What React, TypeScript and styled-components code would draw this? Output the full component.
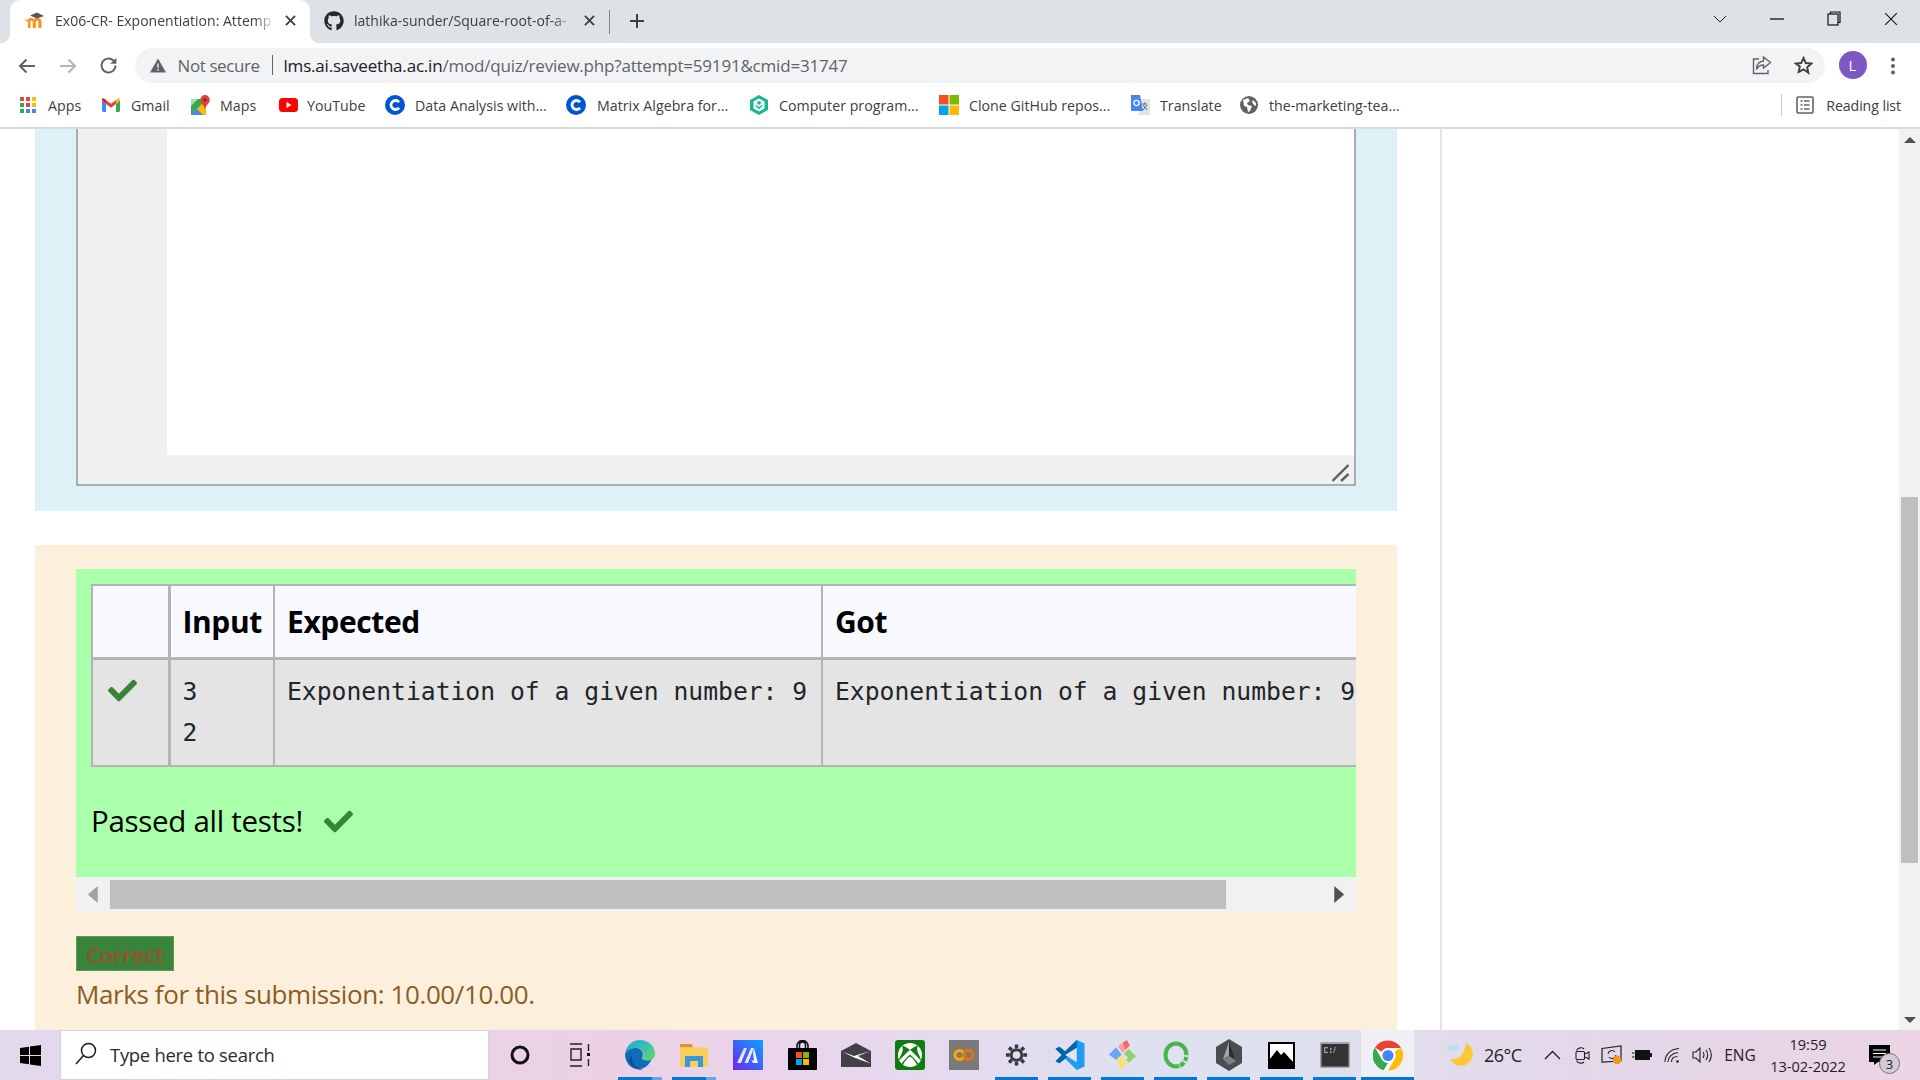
import React from "react";
import styled, { createGlobalStyle } from "styled-components";
import { FaGithub, FaCheck } from "react-icons/fa";

const UI = `"Open Sans", "Noto Sans", "Liberation Sans", sans-serif`;

const Global = createGlobalStyle`
  html, body { margin: 0; padding: 0; background: #fff; overflow: hidden; }
  * { box-sizing: border-box; }
`;

const Screen = styled.div`
  width: 1920px; height: 1080px; display: flex; flex-direction: column;
  font-family: ${UI}; overflow: hidden; background: #fff;
`;

/* ---------- tabs ---------- */
const TabStrip = styled.div`
  height: 43px; background: #dee1e6; display: flex; align-items: stretch; padding-left: 10px; flex: none;
`;
const Tab = styled.div<{ $active?: boolean; $w: number }>`
  position: relative; width: ${(p) => p.$w}px; display: flex; align-items: center;
  padding: 0 14px 2px 14px; gap: ${(p) => (p.$active ? 9 : 10)}px; font-size: 14px; color: #3c4043;
  border-radius: 10px 10px 0 0; background: ${(p) => (p.$active ? "#fff" : "transparent")};
  &::before, &::after {
    content: ""; display: ${(p) => (p.$active ? "block" : "none")}; position: absolute; bottom: 0; width: 10px; height: 10px;
  }
  &::before { left: -10px; background: radial-gradient(circle at 0 0, transparent 10px, #fff 10.5px); }
  &::after { right: -10px; background: radial-gradient(circle at 100% 0, transparent 10px, #fff 10.5px); }
`;
const TabTitle = styled.span`
  flex: 1; white-space: nowrap; letter-spacing: 0.02px;
  -webkit-mask-image: linear-gradient(90deg, #000 90%, transparent 100%);
  mask-image: linear-gradient(90deg, #000 90%, transparent 100%);
`;
const TabSep = styled.div`
  width: 1px; height: 24px; background: #80868b; align-self: center;
`;
const NewTab = styled.div`
  width: 54px; display: flex; align-items: center; justify-content: center; padding-bottom: 1px;
`;
const StripSpace = styled.div`flex: 1;`;
const WinBtn = styled.div<{ $w: number }>`
  width: ${(p) => p.$w}px; display: flex; align-items: center; justify-content: center; padding-bottom: 6px;
`;

/* ---------- toolbar ---------- */
const Toolbar = styled.div`
  height: 43px; flex: none; display: flex; align-items: flex-start; padding: 5px 0 0 7px;
`;
const NavBtn = styled.div`
  width: 40.5px; height: 35px; display: flex; align-items: center; justify-content: center;
`;
const Omnibox = styled.div`
  width: 1690px; height: 35px; margin-left: 6px; border-radius: 18px; background: #f1f3f4;
  display: flex; align-items: center; padding: 0 1px 1px 15px; font-size: 17px; color: #5f6368;
`;
const NotSecure = styled.span`margin-left: 12px; width: 83px; white-space: nowrap; letter-spacing: -0.4px;`;
const Divider = styled.span`width: 1px; height: 20px; background: #5f6368; margin: 0 11px;`;
const Url = styled.span`white-space: nowrap; letter-spacing: -0.2px; flex: 1;`;
const UrlHost = styled.span`color: #202124;`;
const OmniIcon = styled.div`width: 41px; display: flex; align-items: center; justify-content: center;`;
const Avatar = styled.div`
  width: 28px; height: 28px; border-radius: 50%; background: #7e57c2; color: #fff; margin: 3px 0 0 14px;
  font-size: 15px; display: flex; align-items: center; justify-content: center; flex: none;
`;
const Dots = styled.div`width: 40px; margin-left: 6px; display: flex; justify-content: center; height: 35px; align-items: center;`;

/* ---------- bookmarks ---------- */
const Bookmarks = styled.div`
  height: 43px; flex: none; display: flex; align-items: center; padding: 0 0 3px 20px;
  border-bottom: 2px solid #dadce0; font-size: 14.2px; color: #3c4043;
`;
const Mark = styled.div<{ $w: number; $gap: number }>`
  width: ${(p) => p.$w}px; display: flex; align-items: center; gap: ${(p) => p.$gap}px; white-space: nowrap; flex: none;
`;
const MarkText = styled.span`letter-spacing: 0.02px;`;
const BarSep = styled.div`width: 1px; height: 22px; background: #c9cbce; margin: 0 14px 0 auto;`;
const ReadingItem = styled.div`display: flex; align-items: center; gap: 12px; padding-right: 19px; letter-spacing: -0.1px;`;

/* ---------- page ---------- */
const Viewport = styled.div`flex: 1; min-height: 0; display: flex;`;
const Page = styled.div`width: 1440px; flex: none; display: flex; flex-direction: column; padding-left: 35px; overflow: hidden;`;
const Aside = styled.div`flex: 1; border-left: 2px solid #e4e4e4;`;

const AnswerPanel = styled.div`
  width: 1362px; height: 382px; flex: none; background: #def1f7; padding: 0 41px 25px;
`;
const EditorFrame = styled.div`
  width: 1280px; height: 100%; background: #f0f0f0; border: 2px solid #acacac; border-top: 0;
  display: grid; grid-template-columns: 89px 1fr; grid-template-rows: 1fr 29px;
`;
const Gutter = styled.div`background: #f0f0f0;`;
const Code = styled.div`background: #fff;`;
const EditorFoot = styled.div`
  grid-column: 1 / 3; display: flex; justify-content: flex-end; align-items: flex-end; padding: 0 4px 2px 0;
`;

const FeedbackPanel = styled.div`
  width: 1362px; flex: 1; min-height: 0; margin-top: 34px; background: #fcefdc; padding: 24px 0 0 41px;
`;
const Results = styled.div`
  width: 1280px; height: 308px; background: #aaffaa; padding: 15px 0 0 15px; overflow: hidden;
`;
const Table = styled.table`
  border-collapse: collapse; table-layout: fixed; width: 1279px; background: #e4e4e4;
`;
const HeadCell = styled.th<{ $w: number; $thick?: boolean }>`
  width: ${(p) => p.$w}px; height: 73px; background: #f8f9ff; text-align: left; padding: 0 0 0 12px; color: #000;
  font-size: 30px; font-weight: 700; letter-spacing: -0.4px;
  border: 2px solid #b4b4b4; border-bottom-width: 3px; border-right-width: ${(p) => (p.$thick ? 3 : 2)}px;
`;
const BodyCell = styled.td<{ $thick?: boolean }>`
  height: 108px; vertical-align: top; padding: 11px 0 0 12px; color: #212529; white-space: pre;
  font-family: "DejaVu Sans Mono", "Liberation Mono", monospace; font-size: 24.7px; line-height: 41px;
  border: 2px solid #b4b4b4; border-right-width: ${(p) => (p.$thick ? 3 : 2)}px;
`;
const TableCheck = styled(FaCheck)`
  color: #3a833a; width: 29px; height: 29px; display: block; margin: 5px 0 0 3px;
`;
const Passed = styled.div`
  display: flex; align-items: center; gap: 21px; margin-top: 32px;
  font-size: 29.5px; line-height: 44px; color: #000; letter-spacing: -0.3px;
`;
const PassedCheck = styled(FaCheck)`color: #3a833a; width: 29px; height: 29px;`;
const HScroll = styled.div`
  width: 1280px; height: 35px; flex: none; background: #f1f1f1; display: flex; align-items: center;
`;
const ScrollEnd = styled.div<{ $w: number }>`
  width: ${(p) => p.$w}px; display: flex; justify-content: center; flex: none;
`;
const HThumb = styled.div`width: 1116px; height: 29px; background: #bfbfbf; margin-top: -1px; flex: none;`;
const HSpace = styled.div`flex: 1;`;
const Verdict = styled.div`
  align-self: flex-start; width: 98px; height: 35px; margin-top: 24px; background: #3a833a; border: 1px solid #5a9a58;
  color: #87592c; font-size: 22px; font-weight: 700; display: flex; align-items: center; justify-content: center; letter-spacing: -0.5px;
`;
const Marks = styled.div`
  margin-top: 4px; font-size: 26px; line-height: 38px; color: #8a5d24; white-space: nowrap; letter-spacing: -0.4px;
`;

const VScroll = styled.div`
  width: 21px; flex: none; background: #f1f1f1; display: flex; flex-direction: column; align-items: center;
`;
const VEnd = styled.div`height: 21px; display: flex; align-items: center; justify-content: center; flex: none;`;
const VThumb = styled.div`width: 17px; height: 366px; margin-top: 347px; background: #bfbfbf; flex: none;`;
const VSpace = styled.div`flex: 1;`;

/* ---------- taskbar ---------- */
const Taskbar = styled.div`
  height: 50px; flex: none; display: flex; align-items: stretch;
  background: linear-gradient(90deg, #e2d9ec 0%, #e8d2e8 15%, #ecd1e6 33%, #e8d7ee 45%, #dfe0f0 58%, #dfe0ef 70%, #e2dcec 74%, #e4d5e7 88%, #ecd4e4 100%);
`;
const Start = styled.div`width: 60px; display: flex; align-items: center; justify-content: center; flex: none;`;
const Search = styled.div`
  width: 429px; flex: none; background: #fff; border: 1px solid #d5d1da; display: flex; align-items: center;
  padding: 0 0 2px 14px; gap: 13px; font-size: 18.4px; color: #2b2b2b; letter-spacing: -0.25px;
`;
const SysBtn = styled.div<{ $nudge: number }>`
  width: 60px; flex: none; display: flex; align-items: center; justify-content: center; padding-left: ${(p) => p.$nudge}px;
`;
const Apps = styled.div`display: flex; margin-left: 4px; flex: none;`;
const AppBtn = styled.div<{ $w: number; $run?: "split" | "full" | "active" }>`
  position: relative; width: ${(p) => p.$w}px; flex: none; display: flex; align-items: center; justify-content: center;
  background: ${(p) => (p.$run === "active" ? "#f0eff5" : "transparent")};
  &::after {
    content: ""; position: absolute; bottom: 0; height: 3px; background: ${(p) =>
      p.$run === "split" ? "linear-gradient(90deg,#0078d7 77%,#63a9e2 77%)" : "#0078d7"};
    display: ${(p) => (p.$run ? "block" : "none")};
    left: ${(p) => (p.$run === "active" ? 0 : 5)}px; right: ${(p) => (p.$run === "active" ? 0 : 5)}px;
  }
`;
const Tray = styled.div`margin-left: 26px; display: flex; align-items: center; flex: none; color: #1f1f1f;`;
const TrayCell = styled.div<{ $w: number }>`
  width: ${(p) => p.$w}px; height: 100%; display: flex; align-items: center; justify-content: center; flex: none;
`;
const Temp = styled(TrayCell)`font-size: 18px; justify-content: flex-start; padding-left: 4px; letter-spacing: -0.5px;`;
const Lang = styled(TrayCell)`font-size: 15.5px; letter-spacing: -0.1px;`;
const Clock = styled(TrayCell)`
  flex-direction: column; font-size: 14.6px; line-height: 22px; padding-bottom: 1px; letter-spacing: -0.05px;
`;
const Notify = styled(TrayCell)`position: relative;`;
const Badge = styled.span`
  position: absolute; left: 26px; top: 23px; width: 21px; height: 21px; border-radius: 50%; background: #d2cdd4;
  border: 1px solid #77737a; font-size: 13px; display: flex; align-items: center; justify-content: center; color: #222;
`;

/* ---------- icons ---------- */
const Moodle = () => (
  <svg width="22" height="20" viewBox="0 0 22 20"><path d="M4 17V9.500C4 7.500 5.500 7 7 7c1.200 0 2.200.5 2.800 1.400C10.500 7.500 11.500 7 13 7c2.500 0 4.500 1 4.500 3.500V17h-3.200v-6c0-.8-.4-1.300-1.200-1.300s-1.200.5-1.200 1.300v6H8.700v-6c0-.8-.5-1.300-1.200-1.300s-1 .5-1 1.300V17z" fill="#f7931e"/><path d="M6 4.500L13 1.500l7 3.500-7 2.500z" fill="#58595b"/><path d="M0 8.500h4v3z" fill="#f9a94d"/></svg>
);
const X = ({ s = 12, c = "#3c4043", w = 2 }: { s?: number; c?: string; w?: number }) => (
  <svg width={s} height={s} viewBox="0 0 12 12"><path d="M1 1l10 10M11 1L1 11" stroke={c} strokeWidth={w} fill="none" /></svg>
);
const Back = ({ c = "#5f6368", flip = false }: { c?: string; flip?: boolean }) => (
  <svg width="18" height="16" viewBox="0 0 18 16" transform={flip ? "scale(-1 1)" : undefined}><path d="M17 8H2M8.500 1.500L2 8l6.500 6.500" stroke={c} strokeWidth="2" fill="none" /></svg>
);
const Reload = () => (
  <svg width="21" height="21" viewBox="0 0 24 24"><path d="M20 12a8 8 0 1 1-2.400-5.700L20 8.500" stroke="#5f6368" strokeWidth="2.200" fill="none"/><path d="M21 3v7h-7z" fill="#5f6368"/></svg>
);
const Warn = () => (
  <svg width="16" height="15" viewBox="0 0 16 15"><path d="M8 0.500L16 14.500H0z" fill="#5f6368"/><path d="M7.300 5.500h1.400v4.500H7.300zM7.300 11h1.400v1.400H7.300z" fill="#f1f3f4"/></svg>
);
const Share = () => (
  <svg width="20" height="20" viewBox="0 0 20 20" fill="none" stroke="#5f6368" strokeWidth="1.400"><path d="M7 4H1.500v14.500H16V15"/><path d="M11.500 2l7 5.500-7 5.500v-3c-3.500 0-5.500 1.500-7 4.500 0-5 2.500-8 7-8.500z"/></svg>
);
const Star = () => (
  <svg width="19" height="19" viewBox="0 0 24 24" fill="none" stroke="#3c4043" strokeWidth="2.400"><path d="M12 2.500l2.900 6.400 7 .7-5.300 4.700 1.500 6.900L12 16.800l-6.100 3.400 1.500-6.900L2.100 9.600l7-.7z"/></svg>
);
const Kebab = () => (
  <svg width="4" height="18" viewBox="0 0 4 18" fill="#5f6368"><circle cx="2" cy="2.500" r="2"/><circle cx="2" cy="9" r="2"/><circle cx="2" cy="15.500" r="2"/></svg>
);
const AppsGrid = () => {
  const c = ["#ea4335", "#ea4335", "#fbbc04", "#34a853", "#ea4335", "#fbbc04", "#34a853", "#4285f4", "#4285f4"];
  return (
    <svg width="16" height="16" viewBox="0 0 16 16">
      {c.map((f, i) => <rect key={i} x={(i % 3) * 6} y={Math.floor(i / 3) * 6} width="4" height="4" fill={f} />)}
    </svg>
  );
};
const Gmail = () => (
  <svg width="18" height="14" viewBox="0 0 18 14"><path d="M0 2v10.500C0 13.300.7 14 1.500 14H4V6z" fill="#4285f4"/><path d="M14 14h2.500c.8 0 1.500-.7 1.500-1.500V2l-4 4z" fill="#34a853"/><path d="M0 2l4 4v-4L2 .5C1-.2 0 .5 0 2z" fill="#c5221f"/><path d="M4 6V2l5 3.800L14 2v4L9 9.800z" fill="#ea4335"/><path d="M14 2v4l4-4c0-1.500-1-2.200-2-1.500z" fill="#fbbc04"/></svg>
);
const Maps = () => (
  <svg width="19" height="20" viewBox="0 0 19 20"><path d="M0 4h11v16H0z" fill="#34a853"/><path d="M0 20l11-11 4 4v7z" fill="#fbbc04"/><path d="M0 20l6-6 6 6z" fill="#4285f4"/><path d="M0 4h7L0 11z" fill="#a7d8a7"/><path d="M14 0a4.800 4.800 0 0 1 4.800 4.800C18.800 8 15 10.500 14 14c-1-3.500-4.800-6-4.800-9.200A4.800 4.800 0 0 1 14 0z" fill="#db4437"/><circle cx="14" cy="4.800" r="1.600" fill="#8a2018"/></svg>
);
const YouTube = () => (
  <svg width="19" height="14" viewBox="0 0 19 14"><rect width="19" height="14" rx="3.500" fill="#f00"/><path d="M7.500 4l5 3-5 3z" fill="#fff"/></svg>
);
const Coursera = () => (
  <svg width="20" height="20" viewBox="0 0 20 20"><circle cx="10" cy="10" r="10" fill="#0056d2"/><path d="M14 7.200a4.500 4.500 0 1 0 0 5.600" stroke="#fff" strokeWidth="2.800" fill="none"/></svg>
);
const Kode = () => (
  <svg width="18" height="20" viewBox="0 0 18 20"><path d="M9 0l9 5v10l-9 5-9-5V5z" fill="#17b890"/><path d="M9 3.500l5.500 3v7L9 16.500l-5.500-3v-7z" fill="#fff"/><circle cx="9" cy="7.800" r="1.900" fill="#17b890"/><path d="M5 10l4 4.500 4-4.500-1.500 0L9 12l-2.500-2z" fill="#17b890"/></svg>
);
const Ms = () => (
  <svg width="20" height="20" viewBox="0 0 20 20"><rect width="9.500" height="9.500" fill="#f25022"/><rect x="10.500" width="9.500" height="9.500" fill="#7fba00"/><rect y="10.500" width="9.500" height="9.500" fill="#00a4ef"/><rect x="10.500" y="10.500" width="9.500" height="9.500" fill="#ffb900"/></svg>
);
const Translate = () => (
  <svg width="20" height="20" viewBox="0 0 20 20"><path d="M8 4h12v16H9z" fill="#dfe3ea"/><path d="M12 9h5M14.500 7.500v2M13 15l4-5M13 10l4 5" stroke="#5f6b7a" strokeWidth="1" fill="none"/><path d="M1 0h9l3 16H2.500C1.500 16 1 15.500 1 14.500z" fill="#4285f4"/><circle cx="6.500" cy="8" r="2.600" fill="none" stroke="#fff" strokeWidth="1.300"/></svg>
);
const Globe = () => (
  <svg width="18" height="18" viewBox="0 0 18 18"><circle cx="9" cy="9" r="9" fill="#5f6368"/><path d="M3 4l5-2 2 3-3 2 1 2 4 1-2 5-2 1-1-5-3-1zM13 4l3 3v3l-2-1-2-3z" fill="#fff"/></svg>
);
const ReadingList = () => (
  <svg width="18" height="18" viewBox="0 0 18 18" fill="none" stroke="#5f6368" strokeWidth="1.600"><rect x="1" y="1" width="16" height="16" rx="1"/><path d="M6.500 5H4.500M13.500 5H8M6.500 9H4.500M13.500 9H8M6.500 13H4.500M13.500 13H8"/></svg>
);
const Resize = () => (
  <svg width="18" height="18" viewBox="0 0 18 18" stroke="#606060" strokeWidth="2.400"><path d="M0.500 17L16.500 1M9 17l7.500-7"/></svg>
);
const Tri = ({ d, c = "#505050", s = 12 }: { d: "l" | "r" | "u" | "d"; c?: string; s?: number }) => {
  const p = { l: "M9 0v12L2 6z", r: "M3 0v12l7-6z", u: "M0 9h12L6 3z", d: "M0 3h12L6 9z" }[d];
  return <svg width={s} height={s} viewBox="0 0 12 12"><path d={p} fill={c} /></svg>;
};
const WinLogo = () => (
  <svg width="21" height="21" viewBox="0 0 21 21" fill="#000"><path d="M0 3l9-1.300V10H0zM10 1.500L21 0v10H10zM0 11h9v8.300L0 18zM10 11h11v10l-11-1.500z"/></svg>
);
const Lens = () => (
  <svg width="22" height="24" viewBox="0 0 22 24" fill="none" stroke="#1a1a1a" strokeWidth="1.500"><circle cx="13.500" cy="8.500" r="7"/><path d="M8.500 13.500L1 22"/></svg>
);
const Ring = () => (
  <svg width="20" height="20" viewBox="0 0 20 20"><circle cx="10" cy="10" r="8" fill="none" stroke="#111" strokeWidth="3"/></svg>
);
const TaskView = () => (
  <svg width="22" height="24" viewBox="0 0 22 24" fill="none" stroke="#222" strokeWidth="1.400"><path d="M0 1h12M0 23h12M1 6h10v11H1z"/><path d="M18.500 1v7M18.500 16v7"/><rect x="17" y="10" width="3" height="3" fill="#111" stroke="none"/></svg>
);
const Edge = () => (
  <svg width="30" height="30" viewBox="0 0 30 30">
    <defs>
      <linearGradient id="eg" x1="0" y1="0" x2="1" y2="1"><stop offset="0" stopColor="#1fa7d8"/><stop offset=".5" stopColor="#35c1b0"/><stop offset="1" stopColor="#6ad85a"/></linearGradient>
    </defs>
    <path d="M15 0c9 0 15 6.500 15 14 0 4-3 6.500-7 6.500-3 0-5.500-1-5.500-2.500 0-1 1-1.500 1-3.500C18.500 10 15 8 11.500 8 6 8 2 11 0 14 1 6 7 0 15 0z" fill="url(#eg)"/>
    <path d="M0 14c2-3.500 6-6 11-6 4 0 7 2.500 7 6.500 0 2-1 2.500-1 3.500 0 1.500 3 2.500 5.500 2.500 1.500 0 3-.5 4-1.500-2 6-7 10-12.500 10C6 29.500 0 23 0 14z" fill="#0f6cbd"/>
    <path d="M7 16c-1 6 3 13 11 13.500C12 31 5 26 4 20c0-2 1.500-3.500 3-4z" fill="#0a4f91"/>
  </svg>
);
const Explorer = () => (
  <svg width="28" height="23" viewBox="0 0 28 23"><path d="M0 1.500C0 .7.700 0 1.500 0h10l2 3.500H0z" fill="#d99a1c"/><path d="M0 3.500h26c1.100 0 2 .9 2 2V21c0 1.100-.9 2-2 2H2c-1.100 0-2-.9-2-2z" fill="#f9cf5b"/><path d="M5 12h18v11h-5v-6h-8v6H5z" fill="#3a97d8"/></svg>
);
const Automate = () => (
  <svg width="30" height="30" viewBox="0 0 30 30">
    <defs><linearGradient id="ag" x1="1" y1="0" x2="0" y2="1"><stop offset="0" stopColor="#0aa2ff"/><stop offset="1" stopColor="#6a27f0"/></linearGradient></defs>
    <rect width="30" height="30" fill="url(#ag)"/>
    <path d="M4 23L11 8h3L8 23zM11.500 23L18 8h3l-6 15z" fill="#e6e6ff"/><path d="M21 8l4 15h-5l-1.500-2.500h2.500L20 14z" fill="#f2f0ff"/>
  </svg>
);
const Store = () => (
  <svg width="29" height="30" viewBox="0 0 29 30"><path d="M9 8V6a5.500 5.500 0 0 1 11 0v2M11.500 8V5a3 3 0 0 1 6 0v3" fill="none" stroke="#111" strokeWidth="1.500"/><rect y="8" width="29" height="22" rx="1" fill="#000"/><rect x="8" y="12" width="6" height="6" fill="#f25022"/><rect x="15" y="12" width="6" height="6" fill="#7fba00"/><rect x="8" y="19" width="6" height="6" fill="#00a4ef"/><rect x="15" y="19" width="6" height="6" fill="#ffb900"/></svg>
);
const Mail = () => (
  <svg width="30" height="24" viewBox="0 0 30 24"><path d="M15 0l15 8v16H0V8z" fill="#453f48"/><path d="M1 8.500L13 13 29.500 8 17 13l12.500 7.500L13 14.500z" fill="#fff"/></svg>
);
const Xbox = () => (
  <svg width="30" height="30" viewBox="0 0 30 30"><rect width="30" height="30" rx="3" fill="#107c10"/><circle cx="15" cy="15" r="12" fill="#fff"/><path d="M15 10C12 7.500 9 5.500 7 6 10 11.500 4 16.500 4 20.500l6-6c2-2 3.500-3.500 5-4.500zM15 10c3-2.500 6-4.500 8-4-3 5.500 3 10.500 3 14.500l-6-6c-2-2-3.500-3.500-5-4.500z" fill="#107c10"/><path d="M15 14.500c-3 2.500-6 6-8.500 9l1.500 1.500c1-2.500 4-7 7-8.500 3 1.500 6 6 7 8.500l1.500-1.500c-2.500-3-5.500-6.500-8.500-9z" fill="#107c10"/></svg>
);
const Colab = () => (
  <svg width="30" height="30" viewBox="0 0 30 30"><rect width="30" height="30" fill="#7a7a7a"/><circle cx="10.500" cy="15" r="4.500" fill="none" stroke="#f9ab00" strokeWidth="3"/><circle cx="19.500" cy="15" r="4.500" fill="none" stroke="#e8710a" strokeWidth="3"/></svg>
);
const Gear = () => (
  <svg width="23" height="24" viewBox="0 0 24 24" fill="none" stroke="#3a3a3e" strokeWidth="3"><circle cx="12" cy="12" r="5.500"/><path d="M12 1v4M12 19v4M1 12h4M19 12h4M4.200 4.200l2.900 2.900M16.900 16.900l2.900 2.900M4.200 19.800l2.900-2.900M16.900 7.100l2.900-2.900" strokeWidth="3.600"/></svg>
);
const VSCode = () => (
  <svg width="30" height="30" viewBox="0 0 30 31"><path d="M22 0l8 3.500v24L22 31 10 19.500 4 24l-4-2 6.500-6.500L0 9l4-2 6 4.500z" fill="#1f9cf0"/><path d="M22 0L10 11.500 4 7 0 9l6.500 6.500L0 22l4 2 6-4.500L22 8z" fill="#0065a9"/><path d="M22 8v15l-12-7.500z" fill="#e6e2ef"/></svg>
);
const GitKraken = () => (
  <svg width="31" height="30" viewBox="0 0 30 33">
    <path d="M15 3l5-3 3 6-5 5z" fill="#f06a6a"/><path d="M10 7l5-4 3 8-3 3z" fill="#f4a0a0"/>
    <path d="M0 16l8-8 6 8-6 6z" fill="#6aa7f8"/><path d="M17 14l5-4 8 8-8 7-3-3 2-3-4-3z" fill="#8fd36a"/>
    <path d="M8 22l6-5 6 8-6 8z" fill="#f7e07a"/>
  </svg>
);
const Loop = () => (
  <svg width="26" height="28" viewBox="0 0 26 28"><ellipse cx="13" cy="14" rx="10.500" ry="11.500" fill="none" stroke="#46b54a" strokeWidth="4"/><ellipse cx="13" cy="14" rx="10.500" ry="11.500" fill="none" stroke="#c9eec4" strokeWidth="4" strokeDasharray="2 4 2 5 1 60"/></svg>
);
const HexApp = () => (
  <svg width="26" height="32" viewBox="0 0 26 32"><path d="M13 0l13 8v16l-13 8L0 24V8z" fill="#4a4d52"/><path d="M13 3L7 20l6-3.500z" fill="#a4a8ad"/><path d="M13 3l6 17-6-3.500z" fill="#2b2d31"/><path d="M7 20l6 6 7-4-7-5z" fill="#7d8186"/></svg>
);
const Photos = () => (
  <svg width="27" height="27" viewBox="0 0 27 27"><rect x="1" y="1" width="25" height="25" fill="#fff" stroke="#000" strokeWidth="2"/><path d="M2 25V17l7-9 4 5 3-3 9 10v5z" fill="#000"/></svg>
);
const Cmd = () => (
  <svg width="30" height="26" viewBox="0 0 30 26"><rect width="30" height="26" rx="1.500" fill="#a5a3a8"/><rect x="1.500" y="2" width="27" height="22.500" fill="#333335"/><path d="M4 5h4v1.200H5.300v3.600H8V11H4zM10 9h1.500v2H10zM10 6h1.500v2H10zM13 11l2-6h1l-2 6z" fill="#9c9a9f"/></svg>
);
const Chrome = () => (
  <svg width="30" height="31" viewBox="0 0 30 30"><circle cx="15" cy="15" r="15" fill="#fff"/><path d="M15 0a15 15 0 0 1 13 7.500H15a7.500 7.500 0 0 0-6.500 3.800L2 7A15 15 0 0 1 15 0z" fill="#ea4335"/><path d="M28 7.500A15 15 0 0 1 15 30l6.500-11.300A7.500 7.500 0 0 0 21.500 11z" fill="#fbbc04"/><path d="M2 7l6.500 11.300A7.500 7.500 0 0 0 15 22.500L10.500 30 15 30A15 15 0 0 1 2 7z" fill="#34a853"/><circle cx="15" cy="15" r="7" fill="#fff"/><circle cx="15" cy="15" r="5.500" fill="#4285f4"/></svg>
);
const Moon = () => (
  <svg width="30" height="26" viewBox="0 0 30 26"><path d="M21 1a12 12 0 1 1-16 16c7 1.500 14-2 16-16z" fill="#fcc934"/><ellipse cx="8" cy="6" rx="6" ry="3.300" fill="#bcdcf2"/></svg>
);
const Caret = () => (
  <svg width="17" height="10" viewBox="0 0 17 10" fill="none" stroke="#222" strokeWidth="1.400"><path d="M1 9l7.500-7.500L16 9"/></svg>
);
const Meet = () => (
  <svg width="15" height="19" viewBox="0 0 15 19" fill="none" stroke="#222" strokeWidth="1.100"><path d="M1.500 4.500C3 1.500 7 1 9 3M1.500 14.500C3 17.500 7 18 9 16"/><rect x="1" y="5.500" width="8.500" height="8" rx="1"/><path d="M10 8l4-2v7l-4-2"/></svg>
);
const Sync = () => (
  <svg width="22" height="20" viewBox="0 0 22 20"><path d="M1 3.500L20 1v15l-19 1z" fill="none" stroke="#222" strokeWidth="1.200"/><path d="M7 9a4 4 0 0 1 7-2M15 10a4 4 0 0 1-7 2" stroke="#222" strokeWidth="1.100" fill="none"/><circle cx="16" cy="15" r="4.300" fill="#f7941d"/></svg>
);
const Battery = () => (
  <svg width="20" height="12" viewBox="0 0 20 12"><path d="M0 4h2.500M0 8h2.500" stroke="#111" strokeWidth="1"/><rect x="3" y="1" width="15" height="10" fill="#111"/><rect x="18" y="4" width="2" height="4" fill="#111"/></svg>
);
const Wifi = () => (
  <svg width="17" height="16" viewBox="0 0 17 16" fill="none" stroke="#222" strokeWidth="1.100"><path d="M1 15C1 8 6 2 15 1.500M4 15c0-5 4-9 10-9.500"/><path d="M7.500 15c0-3 2-5.500 6-5.500"/><circle cx="13.500" cy="14.500" r="1.300" fill="#222" stroke="none"/></svg>
);
const Speaker = () => (
  <svg width="20" height="16" viewBox="0 0 20 16" fill="none" stroke="#222" strokeWidth="1.100"><path d="M1 5h3l4-4v14l-4-4H1z"/><path d="M11 5c1.200 1.800 1.200 4.200 0 6M14 3c2 3 2 7 0 10M17 1c3 4.500 3 9.500 0 14"/></svg>
);
const Bubble = () => (
  <svg width="21" height="20" viewBox="0 0 21 20"><path d="M0 0h21v17H9l-4 3v-3H0z" fill="#000"/><path d="M4 5h13M4 8.500h13M4 12h9" stroke="#fff" strokeWidth="1.100"/></svg>
);

const marks: { w: number; gap: number; icon: React.ReactNode; label: string }[] = [
  { w: 82, gap: 12, icon: <AppsGrid />, label: "Apps" },
  { w: 89, gap: 11, icon: <Gmail />, label: "Gmail" },
  { w: 88, gap: 10, icon: <Maps />, label: "Maps" },
  { w: 106, gap: 9, icon: <YouTube />, label: "YouTube" },
  { w: 181, gap: 10, icon: <Coursera />, label: "Data Analysis with..." },
  { w: 184, gap: 11, icon: <Coursera />, label: "Matrix Algebra for..." },
  { w: 189, gap: 11, icon: <Kode />, label: "Computer program..." },
  { w: 191, gap: 10, icon: <Ms />, label: "Clone GitHub repos..." },
  { w: 110, gap: 10, icon: <Translate />, label: "Translate" },
  { w: 170, gap: 11, icon: <Globe />, label: "the-marketing-tea..." },
];

const taskApps: { w: number; icon: React.ReactNode; run?: "split" | "full" | "active" }[] = [
  { w: 54, icon: <Edge />, run: "split" },
  { w: 54, icon: <Explorer />, run: "split" },
  { w: 54, icon: <Automate /> },
  { w: 54, icon: <Store /> },
  { w: 54, icon: <Mail /> },
  { w: 54, icon: <Xbox /> },
  { w: 53, icon: <Colab /> },
  { w: 53, icon: <Gear />, run: "full" },
  { w: 53, icon: <VSCode />, run: "full" },
  { w: 53, icon: <GitKraken />, run: "full" },
  { w: 53, icon: <Loop />, run: "full" },
  { w: 53, icon: <HexApp />, run: "full" },
  { w: 53, icon: <Photos />, run: "full" },
  { w: 53, icon: <Cmd />, run: "full" },
  { w: 53, icon: <Chrome />, run: "active" },
];

export default function App() {
  return (
    <Screen>
      <Global />
      <TabStrip>
        <Tab $active $w={300}>
          <Moodle />
          <TabTitle>Ex06-CR- Exponentiation: Attemp</TabTitle>
          <X s={11} />
        </Tab>
        <Tab $w={299}>
          <FaGithub size={20} color="#24292e" />
          <TabTitle>lathika-sunder/Square-root-of-a-</TabTitle>
          <X s={11} />
        </Tab>
        <TabSep />
        <NewTab>
          <svg width="16" height="16" viewBox="0 0 16 16"><path d="M8 1v14M1 8h14" stroke="#3c4043" strokeWidth="2" /></svg>
        </NewTab>
        <StripSpace />
        <WinBtn $w={57}>
          <svg width="14" height="8" viewBox="0 0 14 8"><path d="M1 1l6 6 6-6" stroke="#222" strokeWidth="1" fill="none" /></svg>
        </WinBtn>
        <WinBtn $w={57}>
          <svg width="14" height="2" viewBox="0 0 14 2"><path d="M0 1h14" stroke="#111" strokeWidth="1.300" /></svg>
        </WinBtn>
        <WinBtn $w={57}>
          <svg width="14" height="15" viewBox="0 0 14 15" fill="none" stroke="#111" strokeWidth="1.200"><rect x="1" y="3" width="10" height="11" /><path d="M3.500 3V1H13v10.500h-2" /></svg>
        </WinBtn>
        <WinBtn $w={58}>
          <X s={14} c="#111" w={0.9} />
        </WinBtn>
      </TabStrip>

      <Toolbar>
        <NavBtn><Back /></NavBtn>
        <NavBtn><Back c="#b3b6ba" flip /></NavBtn>
        <NavBtn><Reload /></NavBtn>
        <Omnibox>
          <Warn />
          <NotSecure>Not secure</NotSecure>
          <Divider />
          <Url><UrlHost>lms.ai.saveetha.ac.in</UrlHost>/mod/quiz/review.php?attempt=59191&amp;cmid=31747</Url>
          <OmniIcon><Share /></OmniIcon>
          <OmniIcon><Star /></OmniIcon>
        </Omnibox>
        <Avatar>L</Avatar>
        <Dots><Kebab /></Dots>
      </Toolbar>

      <Bookmarks>
        {marks.map((m) => (
          <Mark key={m.label} $w={m.w} $gap={m.gap}>
            {m.icon}
            <MarkText>{m.label}</MarkText>
          </Mark>
        ))}
        <BarSep />
        <ReadingItem><ReadingList />Reading list</ReadingItem>
      </Bookmarks>

      <Viewport>
        <Page>
          <AnswerPanel>
            <EditorFrame>
              <Gutter />
              <Code />
              <EditorFoot><Resize /></EditorFoot>
            </EditorFrame>
          </AnswerPanel>
          <FeedbackPanel>
            <Results>
              <Table>
                <thead>
                  <tr>
                    <HeadCell $w={77} $thick />
                    <HeadCell $w={105}>Input</HeadCell>
                    <HeadCell $w={548}>Expected</HeadCell>
                    <HeadCell $w={549}>Got</HeadCell>
                  </tr>
                </thead>
                <tbody>
                  <tr>
                    <BodyCell $thick><TableCheck /></BodyCell>
                    <BodyCell>{"3\n2"}</BodyCell>
                    <BodyCell>Exponentiation of a given number: 9</BodyCell>
                    <BodyCell>Exponentiation of a given number: 9</BodyCell>
                  </tr>
                </tbody>
              </Table>
              <Passed>Passed all tests! <PassedCheck /></Passed>
            </Results>
            <HScroll>
              <ScrollEnd $w={34}><Tri d="l" c="#a3a3a3" s={17} /></ScrollEnd>
              <HThumb />
              <HSpace />
              <ScrollEnd $w={36}><Tri d="r" s={17} /></ScrollEnd>
            </HScroll>
            <Verdict>Correct</Verdict>
            <Marks>Marks for this submission: 10.00/10.00.</Marks>
          </FeedbackPanel>
        </Page>
        <Aside />
        <VScroll>
          <VEnd><Tri d="u" /></VEnd>
          <VThumb />
          <VSpace />
          <VEnd><Tri d="d" /></VEnd>
        </VScroll>
      </Viewport>

      <Taskbar>
        <Start><WinLogo /></Start>
        <Search><Lens />Type here to search</Search>
        <SysBtn $nudge={1}><Ring /></SysBtn>
        <SysBtn $nudge={3}><TaskView /></SysBtn>
        <Apps>
          {taskApps.map((a, i) => <AppBtn key={i} $w={a.w} $run={a.run}>{a.icon}</AppBtn>)}
        </Apps>
        <Tray>
          <TrayCell $w={40}><Moon /></TrayCell>
          <Temp $w={57}>26°C</Temp>
          <TrayCell $w={30}><Caret /></TrayCell>
          <TrayCell $w={30}><Meet /></TrayCell>
          <TrayCell $w={30}><Sync /></TrayCell>
          <TrayCell $w={30}><Battery /></TrayCell>
          <TrayCell $w={30}><Wifi /></TrayCell>
          <TrayCell $w={30}><Speaker /></TrayCell>
          <Lang $w={46}>ENG</Lang>
          <Clock $w={90}><span>19:59</span><span>13-02-2022</span></Clock>
          <Notify $w={52}><Bubble /><Badge>3</Badge></Notify>
        </Tray>
      </Taskbar>
    </Screen>
  );
}
